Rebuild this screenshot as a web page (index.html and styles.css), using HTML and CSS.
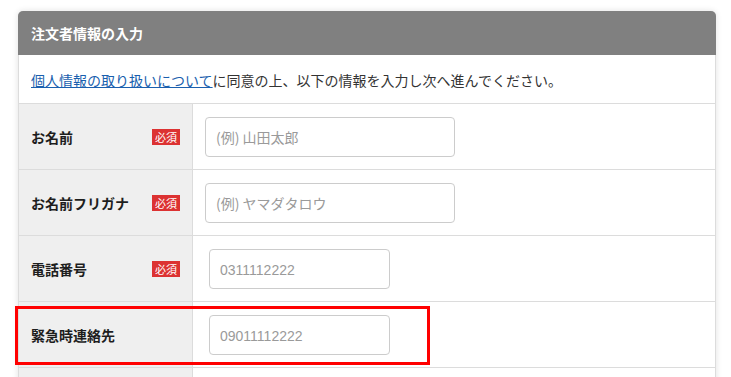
FILE: index.html
```html
<!DOCTYPE html>
<html lang="ja">
<head>
    <meta charset="UTF-8">
    <meta name="viewport" content="width=device-width, initial-scale=1.0">
    <title>注文者情報の入力</title>
    <link rel="stylesheet" href="styles.css">
</head>
<body>
<div class="orderForm">
    <div class="orderForm_head">注文者情報の入力</div>
    <div class="orderForm_intro">
        <a href="#">個人情報の取り扱いについて</a>に同意の上、以下の情報を入力し次へ進んでください。
    </div>

    <div class="orderForm_row">
        <div class="orderForm_label">
            <span>お名前</span>
            <span class="required">必須</span>
        </div>
        <div class="orderForm_field">
            <input type="text" class="textInput" placeholder="(例) 山田太郎">
        </div>
    </div>

    <div class="orderForm_row">
        <div class="orderForm_label">
            <span>お名前フリガナ</span>
            <span class="required">必須</span>
        </div>
        <div class="orderForm_field">
            <input type="text" class="textInput" placeholder="(例) ヤマダタロウ">
        </div>
    </div>

    <div class="orderForm_row">
        <div class="orderForm_label">
            <span>電話番号</span>
            <span class="required">必須</span>
        </div>
        <div class="orderForm_field tel">
            <input type="tel" class="textInput short" placeholder="0311112222">
        </div>
    </div>

    <div class="orderForm_row">
        <div class="orderForm_label">
            <span>緊急時連絡先</span>
        </div>
        <div class="orderForm_field tel">
            <input type="tel" class="textInput short" placeholder="09011112222">
        </div>
        <div class="highlight"></div> <!-- red frame over this row -->
    </div>

    <!-- next row, only its top is visible -->
    <div class="orderForm_row">
        <div class="orderForm_label"></div>
        <div class="orderForm_field"></div>
    </div>
</div>
</body>
</html>
```

FILE: styles.css
```css
body {
    margin: 0;
    padding: 11px 15px 0 18px;
    background: #ffffff;
    font-family: "Noto Sans CJK JP", "Noto Sans", sans-serif;
    font-size: 14px;
    color: #222;
}

.orderForm {
    width: 698px;
    border: 1px solid #dcdcdc;
    border-top: 0;
    border-radius: 5px 5px 0 0;
    box-sizing: border-box;
    box-shadow: 0 0 6px rgba(0, 0, 0, .12);
    background: #ffffff;
}

.orderForm_head {
    height: 44px;
    margin: 0 -1px;
    padding-left: 13px;
    display: flex;
    align-items: center;
    background: #808080;
    color: #ffffff;
    font-weight: bold;
    border-radius: 5px 5px 0 0;
}

.orderForm_intro {
    height: 49px;
    padding: 2px 0 0 12px;
    box-sizing: border-box;
    display: flex;
    align-items: center;
    border-bottom: 1px solid #dcdcdc;
    color: #333;
}

.orderForm_intro a {
    color: #1a5fae;
    text-decoration: underline;
}

/*Rows*/
.orderForm_row {
    position: relative;
    display: flex;
    height: 66px;
    border-bottom: 1px solid #dcdcdc;
    box-sizing: border-box;
}

.orderForm_label {
    width: 174px;
    flex-shrink: 0;
    display: flex;
    align-items: center;
    justify-content: space-between;
    padding: 0 12px;
    box-sizing: border-box;
    background: #efefef;
    border-right: 1px solid #dcdcdc;
    font-weight: bold;
    color: #1e1e1e;
}

.required {
    display: inline-block;
    width: 28px;
    height: 16px;
    line-height: 16px;
    text-align: center;
    background: #dc3232;
    color: #ffffff;
    font-size: 11px;
    font-weight: normal;
}

.orderForm_field {
    display: flex;
    align-items: center;
    padding-left: 12px;
}

.orderForm_field.tel {
    padding-left: 16px;
}

.textInput {
    width: 250px;
    height: 40px;
    padding: 0 10px;
    box-sizing: border-box;
    border: 1px solid #cccccc;
    border-radius: 4px;
    font-family: inherit;
    font-size: 14px;
    outline: none;
}

.textInput.short {
    width: 181px;
}

.textInput::placeholder {
    color: #9a9a9a;
}

.tel .textInput::placeholder {
    font-family: "Liberation Sans", "Noto Sans", sans-serif;
}

/*Highlight frame*/
.highlight {
    position: absolute;
    left: -4px;
    top: 4px;
    width: 415px;
    height: 59px;
    border: 3px solid #ff0000;
    box-sizing: border-box;
    pointer-events: none;
}
```
